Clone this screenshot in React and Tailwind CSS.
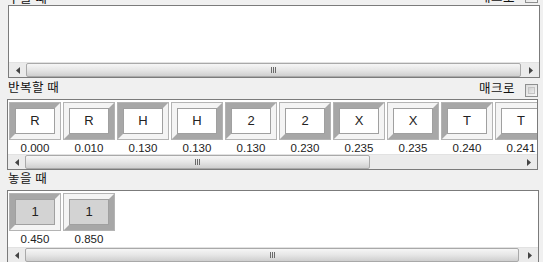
import React from 'react';

const font = { fontFamily: '"Liberation Sans", "Noto Sans CJK KR", sans-serif' };
const krFont = { fontFamily: '"Noto Sans CJK KR", sans-serif' };

const repeatKeys = [
  { k: 'R', t: '0.000', down: true },
  { k: 'R', t: '0.010', down: false },
  { k: 'H', t: '0.130', down: true },
  { k: 'H', t: '0.130', down: false },
  { k: '2', t: '0.130', down: true },
  { k: '2', t: '0.230', down: false },
  { k: 'X', t: '0.235', down: true },
  { k: 'X', t: '0.235', down: false },
  { k: 'T', t: '0.240', down: true },
  { k: 'T', t: '0.241', down: false },
];

const releaseKeys = [
  { k: '1', t: '0.450', down: true },
  { k: '1', t: '0.850', down: false },
];

const Checkbox = () => (
  <div className="w-[13px] h-[13px] border border-[#8e8f8f] bg-gradient-to-br from-[#dcdcdc] to-[#f6f6f6] p-[2px]">
    <div className="w-full h-full border border-[#c4c4c4] bg-gradient-to-br from-[#d0d0d0] to-[#ececec]" />
  </div>
);

const LabelRow = ({ title, macro = true, className = '', textPad = 'pb-[6px]', macroPad = 'pb-[3px]' }) => (
  <div className={`flex justify-between items-end pl-[8px] pr-[5px] ${className}`}>
    <span className={`text-[12.5px] leading-none text-[#111] tracking-[0.5px] ${textPad}`} style={krFont}>
      {title}
    </span>
    {macro && (
      <div className="flex items-end gap-[10px] pb-[2px]">
        <span className={`text-[12.5px] leading-none text-[#111] tracking-[0.5px] ${macroPad}`} style={krFont}>
          매크로
        </span>
        <Checkbox />
      </div>
    )}
  </div>
);

const Arrow = ({ dir }) => (
  <svg width="4" height="7" viewBox="0 0 4 7">
    {dir === 'left' ? <path d="M4 0 L0 3.5 L4 7 Z" fill="#444" /> : <path d="M0 0 L4 3.5 L0 7 Z" fill="#444" />}
  </svg>
);

const ScrollBar = ({ thumb }) => (
  <div className="flex h-[15px] bg-[#ebebeb] border-t border-[#e2e2e2]">
    <div className="w-[17px] flex items-center justify-center">
      <Arrow dir="left" />
    </div>
    <div className="flex-1 flex">
      <div
        className="h-full rounded-[2px] border border-[#a9a9a9] bg-gradient-to-b from-[#f6f6f6] via-[#e6e6e6] to-[#cfcfcf] flex items-center justify-center gap-[1px]"
        style={{ width: thumb }}
      >
        <div className="w-px h-[6px] bg-[#6a6a6a]" />
        <div className="w-px h-[6px] bg-[#6a6a6a]" />
        <div className="w-px h-[6px] bg-[#6a6a6a]" />
      </div>
    </div>
    <div className="w-[17px] flex items-center justify-center">
      <Arrow dir="right" />
    </div>
  </div>
);

const Key = ({ k, t, down, grayFace }) => (
  <div className="flex flex-col items-center w-[50px] shrink-0">
    <div
      className={`w-[50px] h-[36px] border-[5px] ${
        down
          ? 'border-t-[#a7a7a7] border-l-[#a7a7a7] border-b-[#f4f4f4] border-r-[#f4f4f4]'
          : 'border-t-[#f4f4f4] border-l-[#f4f4f4] border-b-[#a7a7a7] border-r-[#a7a7a7]'
      } outline outline-1 outline-[#b4b4b4]`}
    >
      <div
        className={`w-full h-full border border-[#a0a0a0] flex items-center justify-center text-[13px] text-[#222] ${
          grayFace ? 'bg-[#d3d3d3]' : 'bg-white'
        }`}
        style={font}
      >
        {k}
      </div>
    </div>
    <span className="mt-[3px] text-[11.5px] leading-[13px] text-[#222]" style={font}>
      {t}
    </span>
  </div>
);

const Panel = ({ children, thumb, className = '' }) => (
  <div className={`border border-[#7b7b7b] bg-white flex flex-col ${className}`}>
    <div className="flex-1 overflow-hidden">{children}</div>
    <ScrollBar thumb={thumb} />
  </div>
);

export default function App() {
  return (
    <div className="w-[543px] h-[262px] overflow-hidden bg-[#f0f0f0]">
      <LabelRow title="누를 때" className="-mt-[12px] h-[17px]" textPad="pb-[1px]" macroPad="pb-0" />
      <Panel thumb="495px" className="h-[73px] ml-[8px] mr-[3px]" />
      <LabelRow title="반복할 때" className="h-[21px]" />
      <Panel thumb="345px" className="h-[71px] ml-[7px] mr-[5px]">
        <div className="flex gap-[4px] pt-[3px] pl-[2px]">
          {repeatKeys.map((key, i) => (
            <Key key={i} {...key} />
          ))}
        </div>
      </Panel>
      <LabelRow title="놓을 때" macro={false} className="h-[20px]" />
      <Panel thumb="494px" className="h-[73px] ml-[7px] mr-[4px]">
        <div className="flex gap-[4px] pt-[3px] pl-[2px]">
          {releaseKeys.map((key, i) => (
            <Key key={i} {...key} grayFace />
          ))}
        </div>
      </Panel>
    </div>
  );
}
